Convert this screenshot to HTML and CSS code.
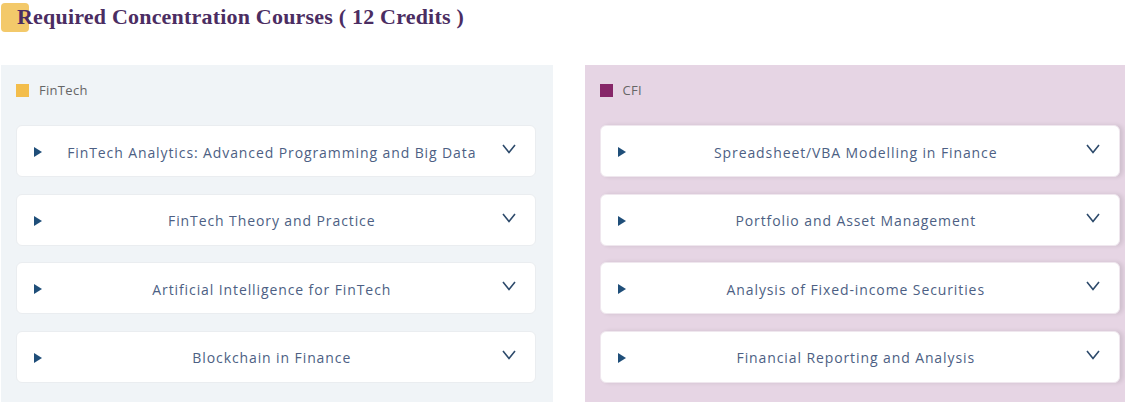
FILE: index.html
```html
<!DOCTYPE html>
<html lang="en">
<head>
  <meta charset="UTF-8">
  <title>Required Concentration Courses</title>
  <link rel="stylesheet" href="styles.css">
</head>
<body>

  <h2 class="title"><span class="title-mark"></span>Required Concentration Courses ( 12 Credits )</h2>

  <div class="tracks">
    <div class="track track-fintech">
      <div class="track-label"><span class="swatch"></span>FinTech</div>
      <div class="course"><span class="tri"></span><span class="name">FinTech Analytics: Advanced Programming and Big Data</span><svg class="chev" viewBox="0 0 14 10"><path d="M1 1 L7 8.5 L13 1"/></svg></div>
      <div class="course"><span class="tri"></span><span class="name">FinTech Theory and Practice</span><svg class="chev" viewBox="0 0 14 10"><path d="M1 1 L7 8.5 L13 1"/></svg></div>
      <div class="course"><span class="tri"></span><span class="name">Artificial Intelligence for FinTech</span><svg class="chev" viewBox="0 0 14 10"><path d="M1 1 L7 8.5 L13 1"/></svg></div>
      <div class="course"><span class="tri"></span><span class="name">Blockchain in Finance</span><svg class="chev" viewBox="0 0 14 10"><path d="M1 1 L7 8.5 L13 1"/></svg></div>
    </div>

    <div class="track track-cfi">
      <div class="track-label"><span class="swatch"></span>CFI</div>
      <div class="course"><span class="tri"></span><span class="name">Spreadsheet/VBA Modelling in Finance</span><svg class="chev" viewBox="0 0 14 10"><path d="M1 1 L7 8.5 L13 1"/></svg></div>
      <div class="course"><span class="tri"></span><span class="name">Portfolio and Asset Management</span><svg class="chev" viewBox="0 0 14 10"><path d="M1 1 L7 8.5 L13 1"/></svg></div>
      <div class="course"><span class="tri"></span><span class="name">Analysis of Fixed-income Securities</span><svg class="chev" viewBox="0 0 14 10"><path d="M1 1 L7 8.5 L13 1"/></svg></div>
      <div class="course"><span class="tri"></span><span class="name">Financial Reporting and Analysis</span><svg class="chev" viewBox="0 0 14 10"><path d="M1 1 L7 8.5 L13 1"/></svg></div>
    </div>
  </div>

</body>
</html>
```

FILE: styles.css
```css
body {
  margin: 0;
  padding: 0;
  background-color: #fff;
  font-family: "Open Sans", Arial, sans-serif;
  color: #3d4d6a;
  overflow: hidden;
}

.title {
  position: relative;
  margin: 0;
  padding: 4px 0 0 17px;
  height: 60px;
  box-sizing: border-box;
  font-family: "Liberation Serif", "Times New Roman", serif;
  font-size: 22px;
  font-weight: bold;
  color: #4b2d62;
  letter-spacing: 0.2px;
}

.title-mark {
  position: absolute;
  left: 1px;
  top: 3px;
  width: 28px;
  height: 29px;
  border-radius: 4px;
  background-color: #f3c96a;
  z-index: -1;
}

.tracks {
  display: flex;
  gap: 32px;
  margin-top: 5px;
  padding-left: 1px;
}

.track {
  width: 552px;
  height: 337px;
  box-sizing: border-box;
  padding: 17px 17px 0 15px;
}

.track-fintech {
  background-color: #f0f4f7;
}

.track-cfi {
  background-color: #e6d5e4;
  width: 541px;
  padding-right: 5px;
}

.track-label {
  display: flex;
  align-items: center;
  font-size: 13px;
  color: #666;
  height: 16px;
  margin-bottom: 27px;
  letter-spacing: 0.3px;
}

.swatch {
  width: 13px;
  height: 13px;
  margin-right: 10px;
  background-color: #f3bd4b;
}

.track-cfi .swatch {
  background-color: #862668;
}

.course {
  display: flex;
  align-items: center;
  height: 52px;
  margin-bottom: 16.5px;
  padding: 2px 19px 0 17px;
  box-sizing: border-box;
  background-color: #fff;
  border: 1px solid #eaedf0;
  border-radius: 6px;
}

.track-cfi .course {
  border-color: #efe7ee;
  box-shadow: 3px 0 4px rgba(0, 0, 0, 0.1);
}

.tri {
  width: 0;
  height: 0;
  border-left: 8px solid #1f4e79;
  border-top: 5px solid transparent;
  border-bottom: 5px solid transparent;
}

.name {
  flex: 1;
  text-align: center;
  font-size: 14px;
  color: #4d5f84;
  letter-spacing: 0.9px;
}

.chev {
  width: 14px;
  height: 10px;
  margin-top: -6px;
  fill: none;
  stroke: #2d4a6b;
  stroke-width: 1.6;
}
```
